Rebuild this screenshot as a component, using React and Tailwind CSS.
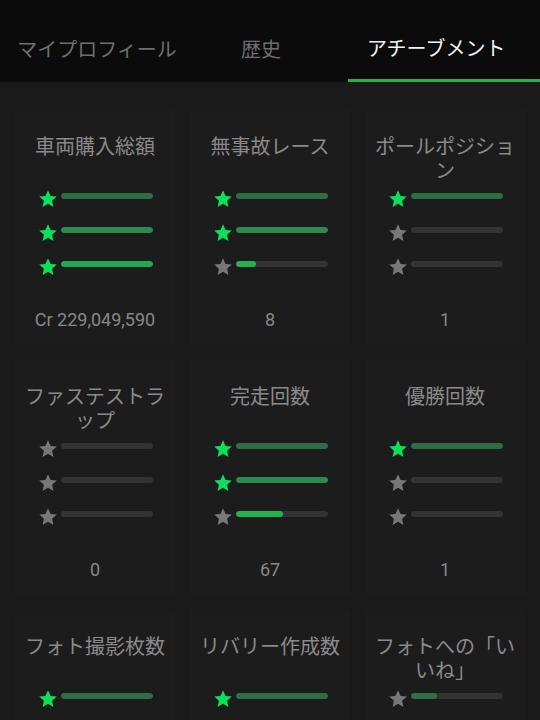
import React from "react";

const cards = [
  { title: "車両購入総額", bars: [1, 1, 1], value: "Cr 229,049,590" },
  { title: "無事故レース", bars: [1, 1, 0.22], value: "8" },
  { title: "ポールポジション", bars: [1, 0, 0], value: "1" },
  { title: "ファステストラップ", bars: [0, 0, 0], value: "0" },
  { title: "完走回数", bars: [1, 1, 0.52], value: "67" },
  { title: "優勝回数", bars: [1, 0, 0], value: "1" },
  { title: "フォト撮影枚数", bars: [1, 1, 0.4], value: "12" },
  { title: "リバリー作成数", bars: [1, 0.5, 0], value: "3" },
  { title: "フォトへの「いいね」", bars: [0.29, 0, 0], value: "3" },
];

const fillColors = ["#2d6e47", "#2a8b4f", "#22a84e"];

function Star({ on }) {
  return (
    <svg width="20" height="20" viewBox="0 0 24 24" className="shrink-0">
      <polygon
        points="12,1.5 15.1,8.3 22.5,9.1 16.9,14.1 18.5,21.5 12,17.7 5.5,21.5 7.1,14.1 1.5,9.1 8.9,8.3"
        fill={on ? "#0be05c" : "#777777"}
      />
    </svg>
  );
}

function Bar({ level, value }) {
  const full = value >= 1;
  const color = full ? fillColors[level] : level === 0 ? "#2d7048" : "#22b24e";
  return (
    <div className="flex h-[34px] items-center justify-center gap-[3px]">
      <Star on={full} />
      <div className="mb-[6px] h-[6px] w-[92px] overflow-hidden rounded-full bg-[#333333]">
        <div
          className="h-full rounded-full"
          style={{ width: `${Math.min(value, 1) * 100}%`, backgroundColor: color }}
        />
      </div>
    </div>
  );
}

function Card({ title, bars, value }) {
  return (
    <div className="flex h-[235px] flex-col items-center bg-[#1c1c1c] px-[4px] pt-[24px]">
      <div className="h-[48px] w-full text-center text-[20px] leading-[24px] text-[#8a8a8a] [line-break:loose]">
        {title}
      </div>
      <div className="flex w-full flex-col">
        {bars.map((v, i) => (
          <Bar key={i} level={i} value={v} />
        ))}
      </div>
      <div
        className="mt-[24px] text-center text-[18px] leading-[24px] text-[#888888]"
        style={{ fontFamily: "Roboto, 'Noto Sans', sans-serif" }}
      >
        {value}
      </div>
    </div>
  );
}

export default function App() {
  return (
    <div
      lang="ja"
      className="min-h-screen w-[540px] bg-[#1a1a1a] pb-[20px]"
      style={{ fontFamily: "'Noto Sans CJK JP', 'Noto Sans', sans-serif" }}
    >
      <div className="flex h-[82px] bg-[#0b0b0b] text-[20px]">
        <div className="flex w-[194px] items-center justify-center pt-[16px] text-[#6f6f6f]">
          マイプロフィール
        </div>
        <div className="flex w-[134px] items-center justify-center pt-[16px] text-[#6f6f6f]">
          歴史
        </div>
        <div className="w-[20px]" />
        <div className="flex w-[192px] flex-col">
          <div className="flex flex-1 items-center pl-[19px] pt-[16px] text-[#f2f2f2]">
            アチーブメント
          </div>
          <div className="h-[3px] bg-[#22b14c]" />
        </div>
      </div>
      <div className="grid grid-cols-3 gap-x-[15px] gap-y-[15px] px-[15px] pt-[28px]">
        {cards.map((c, i) => (
          <Card key={i} {...c} />
        ))}
      </div>
    </div>
  );
}
